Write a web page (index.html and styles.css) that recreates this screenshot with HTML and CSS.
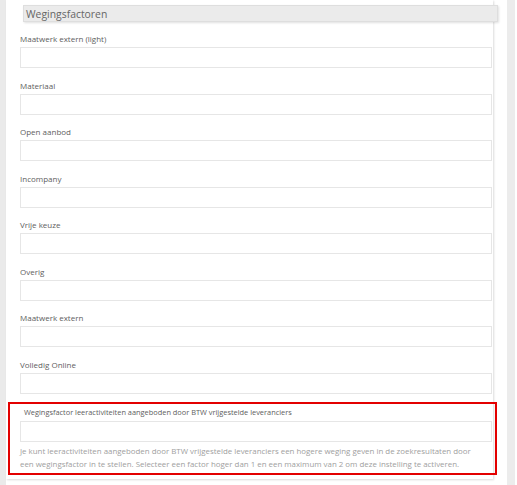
FILE: index.html
```html
<!DOCTYPE html>
<html lang="nl">
<head>
<meta charset="utf-8">
<title>Wegingsfactoren</title>
<link rel="stylesheet" href="styles.css">
</head>
<body>
<div class="page">
  <div class="gutter"></div>
  <main class="panel">
    <div class="card">
      <div class="section-title">Wegingsfactoren</div>
      <div class="field"><label class="label">Maatwerk extern (light)</label><input class="input" type="text"></div>
      <div class="field"><label class="label">Materiaal</label><input class="input" type="text"></div>
      <div class="field"><label class="label">Open aanbod</label><input class="input" type="text"></div>
      <div class="field"><label class="label">Incompany</label><input class="input" type="text"></div>
      <div class="field"><label class="label">Vrije keuze</label><input class="input" type="text"></div>
      <div class="field"><label class="label">Overig</label><input class="input" type="text"></div>
      <div class="field"><label class="label">Maatwerk extern</label><input class="input" type="text"></div>
      <div class="field"><label class="label">Volledig Online</label><input class="input" type="text"></div>
      <div class="field highlight">
        <label class="label indent">Wegingsfactor leeractiviteiten aangeboden door BTW vrijgestelde leveranciers</label>
        <input class="input" type="text">
        <p class="help">Je kunt leeractiviteiten aangeboden door BTW vrijgestelde leveranciers een hogere weging geven in de zoekresultaten door een wegingsfactor in te stellen. Selecteer een factor hoger dan 1 en een maximum van 2 om deze instelling te activeren.</p>
      </div>
    </div>
  </main>
  <div class="scrolltrack"></div>
</div>
</body>
</html>
```

FILE: styles.css
```css
* { box-sizing: border-box; }
html, body { margin: 0; padding: 0; background: #fff; }
body { font-family: "Open Sans", "Noto Sans", sans-serif; color: #555; }

.page {
  display: flex;
  height: 485px;
  overflow: hidden;
}
.gutter {
  width: 6px;
  background: #eaeaea;
  flex: none;
}
.panel {
  flex: 1;
  background: #fff;
}
.scrolltrack {
  width: 8px;
  margin-right: 2px;
  background: #ececec;
  flex: none;
}

.card {
  width: 487px;
  height: 479px;
  padding: 5px 1px 0 14px;
  box-shadow: 1px 1px 2px rgba(0, 0, 0, 0.14);
}

.section-title {
  margin: 0 -6px 11px 3px;
  height: 17px;
  line-height: 16px;
  padding-left: 2px;
  font-size: 10.4px;
  color: #666;
  background: #ebebeb;
  border: 1px solid #dedede;
  box-shadow: 1px 1px 2px rgba(0, 0, 0, 0.12);
}

.field {
  display: flex;
  flex-direction: column;
  margin-bottom: 11.5px;
}
.label {
  font-size: 8px;
  line-height: 12px;
  height: 12px;
  margin-bottom: 2px;
  color: #606060;
  white-space: nowrap;
}
.input {
  height: 21px;
  width: 100%;
  margin: 0;
  border: 1px solid #e6e6e6;
  background: #fff;
  font: inherit;
  outline: none;
}

.highlight {
  margin: -3px -5px 0 -12px;
  padding: 2px 3px 2px 10px;
  border: 2px solid #e30000;
}
.indent { padding-left: 4px; margin-bottom: 3px; font-size: 7.4px; }
.help {
  margin: 3px 0 0;
  padding-right: 12px;
  font-size: 7.9px;
  line-height: 13px;
  color: #a0a0a0;
}
```
